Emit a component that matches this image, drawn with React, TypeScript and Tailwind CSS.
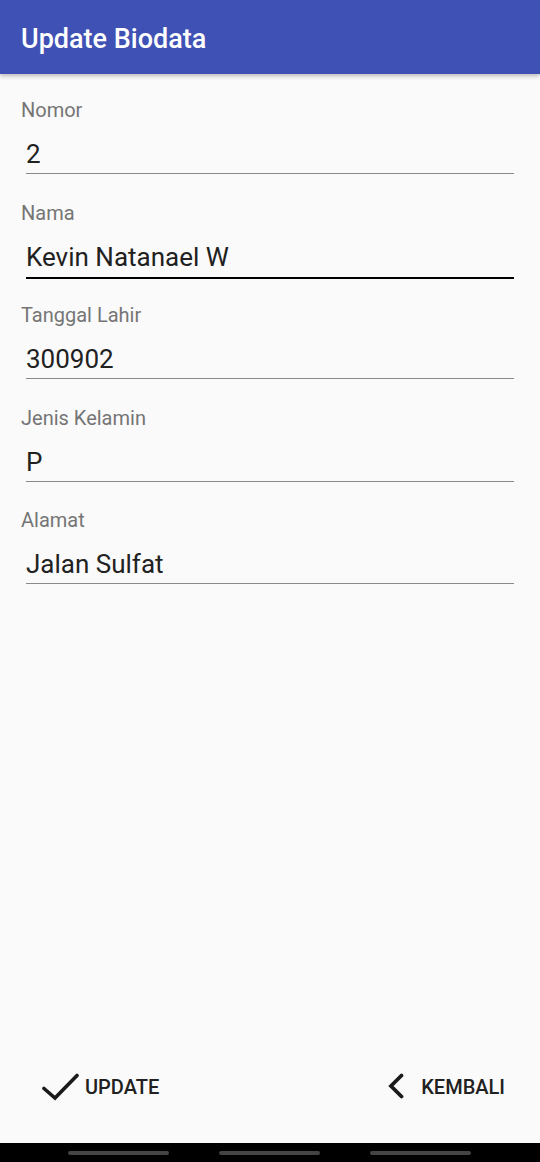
const fields = [
  { label: "Nomor", value: "2", active: false },
  { label: "Nama", value: "Kevin Natanael W", active: true },
  { label: "Tanggal Lahir", value: "300902", active: false },
  { label: "Jenis Kelamin", value: "P", active: false },
  { label: "Alamat", value: "Jalan Sulfat", active: false },
];

function Field({ label, value, active }: { label: string; value: string; active: boolean }) {
  return (
    <div className="h-[102.5px]">
      <div className="pl-[21px] text-[20px] leading-[24px] text-[#757575]">{label}</div>
      <div
        className={
          "mx-[26px] mt-[16px] " +
          (active ? "h-[38px] border-b-2 border-black" : "h-[36px] border-b border-[#8a8a8a]")
        }
      >
        <div className="text-[26px] leading-[32px] text-[#212121]">{value}</div>
      </div>
    </div>
  );
}

export default function App() {
  return (
    <div
      className="flex h-[1162px] w-[540px] flex-col bg-[#fafafa]"
      style={{ fontFamily: "Roboto, 'Liberation Sans', sans-serif" }}
    >
      {/* Toolbar */}
      <header className="relative z-10 flex h-[74px] items-start bg-[#3f51b5] pl-[21px] pt-[22.5px] shadow-[0_2px_4px_rgba(0,0,0,0.25)]">
        <h1 className="text-[27px] font-medium leading-[32px] text-white">Update Biodata</h1>
      </header>

      {/* Form */}
      <main className="flex-1 pt-[24px]">
        {fields.map((f) => (
          <Field key={f.label} {...f} />
        ))}
      </main>

      {/* Actions */}
      <div className="flex items-center justify-between pb-[42px] pl-[40px] pr-[35px]">
        <button className="flex h-[28px] items-center">
          <svg width="40" height="28" viewBox="0 0 40 28" fill="none">
            <polyline points="4,15.5 15,25 37,2.5" stroke="#1a1a1a" strokeWidth="3.6" strokeLinecap="round" strokeLinejoin="miter" />
          </svg>
          <span className="ml-[5px] text-[20px] font-medium leading-[24px] text-[#212121]">UPDATE</span>
        </button>
        <button className="flex h-[28px] items-center">
          <svg width="20" height="28" viewBox="0 0 20 28" fill="none">
            <polyline points="15.5,2.5 5,13 15.5,23.5" stroke="#1a1a1a" strokeWidth="3.8" strokeLinecap="round" strokeLinejoin="miter" />
          </svg>
          <span className="ml-[15px] text-[20px] font-medium leading-[24px] text-[#212121]">KEMBALI</span>
        </button>
      </div>

      {/* System nav bar */}
      <div className="flex h-[19px] items-center gap-[50px] bg-black pl-[68px]">
        <div className="h-[4px] w-[101px] rounded-full bg-[#444]" />
        <div className="h-[4px] w-[101px] rounded-full bg-[#444]" />
        <div className="h-[4px] w-[101px] rounded-full bg-[#444]" />
      </div>
    </div>
  );
}
